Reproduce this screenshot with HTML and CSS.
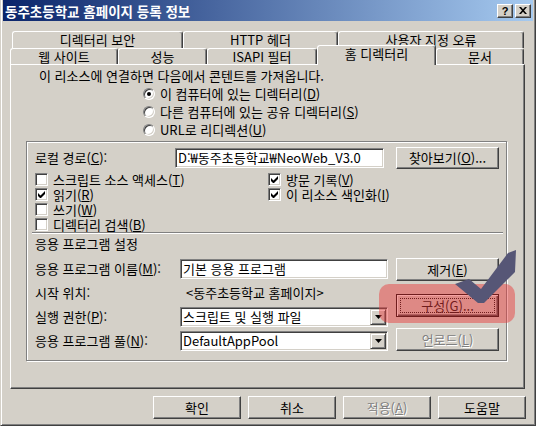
FILE: index.html
```html
<!DOCTYPE html>
<html lang="ko">
<head>
    <meta charset="UTF-8">
    <title>동주초등학교 홈페이지 등록 정보</title>
    <link rel="stylesheet" href="styles.css">
</head>
<body>
    <div class="window">
        <div class="titlebar">
            <span class="title">동주초등학교 홈페이지 등록 정보</span>
            <div class="caption-buttons">
                <div class="caption-btn">?</div>
                <div class="caption-btn">
                    <svg width="8" height="7" viewBox="0 0 8 7"><path d="M0 0h2l2 2.3L6 0h2L5 3.5 8 7H6L4 4.7 2 7H0l3-3.5z" fill="#000"/></svg>
                </div>
            </div>
        </div>

        <div class="client">
            <div class="tabs">
                <div class="tab-row back">
                    <div class="tab" style="width: 171px">디렉터리 보안</div>
                    <div class="tab" style="width: 155px">HTTP 헤더</div>
                    <div class="tab" style="width: 186px">사용자 지정 오류</div>
                </div>
                <div class="tab-row front">
                    <div class="tab" style="width: 108px">웹 사이트</div>
                    <div class="tab" style="width: 89px">성능</div>
                    <div class="tab" style="width: 110px">ISAPI 필터</div>
                    <div class="tab selected" style="width: 119px">홈 디렉터리</div>
                    <div class="tab" style="width: 88px">문서</div>
                </div>
            </div>

            <div class="panel">
                <p class="intro">이 리소스에 연결하면 다음에서 콘텐트를 가져옵니다.</p>
                <div class="radio-list">
                    <div class="option"><span class="radio checked"></span>이 컴퓨터에 있는 디렉터리(<u>D</u>)</div>
                    <div class="option"><span class="radio"></span>다른 컴퓨터에 있는 공유 디렉터리(<u>S</u>)</div>
                    <div class="option"><span class="radio"></span>URL로 리디렉션(<u>U</u>)</div>
                </div>

                <div class="group">
                    <div class="path-row">
                        <span class="path-label">로컬 경로(<u>C</u>):</span>
                        <div class="textbox path">D:₩동주초등학교₩NeoWeb_V3.0</div>
                        <div class="btn">찾아보기(<u>O</u>)...</div>
                    </div>

                    <div class="check-grid">
                        <div class="option"><span class="checkbox"></span>스크립트 소스 액세스(<u>T</u>)</div>
                        <div class="option"><span class="checkbox checked"><svg width="7" height="7" viewBox="0 0 7 7"><path d="M0 2v3l2 2h1l4-4V0L2.5 4.5z" fill="#000"/></svg></span>방문 기록(<u>V</u>)</div>
                        <div class="option"><span class="checkbox checked"><svg width="7" height="7" viewBox="0 0 7 7"><path d="M0 2v3l2 2h1l4-4V0L2.5 4.5z" fill="#000"/></svg></span>읽기(<u>R</u>)</div>
                        <div class="option"><span class="checkbox checked"><svg width="7" height="7" viewBox="0 0 7 7"><path d="M0 2v3l2 2h1l4-4V0L2.5 4.5z" fill="#000"/></svg></span>이 리소스 색인화(<u>I</u>)</div>
                        <div class="option"><span class="checkbox"></span>쓰기(<u>W</u>)</div>
                        <div></div>
                        <div class="option"><span class="checkbox"></span>디렉터리 검색(<u>B</u>)</div>
                    </div>

                    <div class="separator"></div>
                    <div class="section-title">응용 프로그램 설정</div>

                    <div class="app">
                        <div class="app-fields">
                            <span>응용 프로그램 이름(<u>M</u>):</span>
                            <div class="textbox">기본 응용 프로그램</div>
                            <span>시작 위치:</span>
                            <span class="start-value">&lt;동주초등학교 홈페이지&gt;</span>
                            <span>실행 권한(<u>P</u>):</span>
                            <div class="select">
                                <span class="select-value">스크립트 및 실행 파일</span>
                                <span class="select-arrow"><svg width="7" height="4" viewBox="0 0 7 4"><path d="M0 0h7L3.5 4z" fill="#000"/></svg></span>
                            </div>
                            <span>응용 프로그램 풀(<u>N</u>):</span>
                            <div class="select">
                                <span class="select-value">DefaultAppPool</span>
                                <span class="select-arrow"><svg width="7" height="4" viewBox="0 0 7 4"><path d="M0 0h7L3.5 4z" fill="#000"/></svg></span>
                            </div>
                        </div>
                        <div class="app-buttons">
                            <div class="btn">제거(<u>E</u>)</div>
                            <div class="btn default">구성(<u>G</u>)...</div>
                            <div class="btn disabled">언로드(<u>L</u>)</div>
                        </div>
                    </div>
                </div>
            </div>

            <div class="actions">
                <div class="btn action">확인</div>
                <div class="btn action">취소</div>
                <div class="btn action disabled">적용(<u>A</u>)</div>
                <div class="btn action">도움말</div>
            </div>
        </div>

        <!-- annotation drawn over the dialog -->
        <div class="highlight"></div>
        <svg class="tick" width="70" height="60" viewBox="0 0 70 60">
            <path d="M5 36L19 31L31 41L58 5L66 2L65 24L34 55L28 55Z" fill="#565676"/>
        </svg>
    </div>
</body>
</html>
```

FILE: styles.css
```css
* {
    box-sizing: border-box;
}

body {
    margin: 0;
    background: #d4d0c8;
    font-family: "Noto Sans CJK KR", "Noto Sans", sans-serif;
    font-size: 13px;
    line-height: 16px;
    color: #000;
}

.window {
    position: relative;
    width: 536px;
    height: 426px;
    padding: 0 2px 2px 2px;
    background: #d4d0c8;
    border-style: solid;
    border-width: 0 1px 1px 1px;
    border-color: #d4d0c8 #404040 #404040 #d4d0c8;
    box-shadow: inset 1px 0 #fff, inset -1px -1px #808080;
}

.titlebar {
    display: flex;
    align-items: center;
    height: 21px;
    padding-left: 2px;
    background: linear-gradient(to right, #0a246a, #a6caf0);
    color: #fff;
    font-size: 13.5px;
    font-weight: bold;
}

.caption-buttons {
    display: flex;
    gap: 2px;
    margin-left: auto;
    margin-right: 2px;
}

.caption-btn {
    display: flex;
    align-items: center;
    justify-content: center;
    width: 16px;
    height: 14px;
    background: #d4d0c8;
    border: 1px solid;
    border-color: #fff #404040 #404040 #fff;
    box-shadow: inset -1px -1px #808080;
    color: #000;
    font-family: "Liberation Sans", sans-serif;
    font-size: 11px;
    font-weight: bold;
    line-height: 12px;
}

.client {
    padding: 10px 0 0 7px;
}

/* tabs */
.tab-row {
    display: flex;
}

.tab-row.back {
    height: 17px;
    margin-left: 2px;
}

.tab-row.front {
    height: 16px;
    align-items: flex-end;
}

.tab {
    height: 100%;
    border: 1px solid;
    border-bottom: none;
    border-color: #fff #404040 transparent #fff;
    border-radius: 3px 3px 0 0;
    box-shadow: inset -1px 0 #808080;
    text-align: center;
    line-height: 15px;
    white-space: nowrap;
}

.tab.selected {
    position: relative;
    z-index: 1;
    height: 20px;
    margin-bottom: -1px;
    background: #d4d0c8;
    line-height: 16px;
}

.panel {
    width: 515px;
    height: 325px;
    padding: 2px 0 0 15px;
    border: 1px solid;
    border-color: #fff #404040 #404040 #fff;
    box-shadow: inset -1px -1px #808080;
}

.intro {
    margin: 0;
    padding-left: 13px;
    line-height: 18px;
}

.radio-list {
    margin-left: 117px;
}

.option {
    display: flex;
    align-items: center;
    height: 18px;
    line-height: 16px;
    white-space: nowrap;
}

.radio {
    position: relative;
    width: 12px;
    height: 12px;
    margin-right: 5px;
    border-radius: 50%;
    background: #fff;
    border: 1px solid;
    border-color: #808080 #fff #fff #808080;
    box-shadow: inset 1px 1px #404040, inset -1px -1px #d4d0c8;
}

.radio.checked::after {
    content: "";
    position: absolute;
    left: 3px;
    top: 3px;
    width: 4px;
    height: 4px;
    border-radius: 50%;
    background: #000;
}

/* group box */
.group {
    width: 481px;
    height: 220px;
    margin-top: 2px;
    padding: 5px 0 0 8px;
    border: 1px solid #808080;
    box-shadow: inset 1px 1px #fff, 1px 1px #fff;
}

.path-row {
    display: flex;
    align-items: center;
    height: 22px;
}

.path-label {
    width: 140px;
}

.textbox,
.select {
    height: 20px;
    background: #fff;
    border: 1px solid;
    border-color: #808080 #fff #fff #808080;
    box-shadow: inset 1px 1px #404040, inset -1px -1px #d4d0c8;
    line-height: 18px;
    white-space: nowrap;
    overflow: hidden;
}

.textbox {
    padding: 0 2px;
}

.textbox.path {
    width: 209px;
    margin-right: 12px;
}

.btn {
    position: relative;
    display: flex;
    align-items: center;
    justify-content: center;
    width: 103px;
    height: 23px;
    background: #d4d0c8;
    border: 1px solid;
    border-color: #fff #404040 #404040 #fff;
    box-shadow: inset -1px -1px #808080;
    white-space: nowrap;
}

.path-row .btn {
    height: 22px;
}

.btn.default {
    border-color: #000;
    box-shadow: inset 1px 1px #fff, inset -1px -1px #404040, inset -2px -2px #808080;
}

.btn.default::after {
    content: "";
    position: absolute;
    inset: 3px;
    border: 1px dotted #000;
}

.btn.disabled {
    color: #808080;
    text-shadow: 1px 1px #fff;
}

.check-grid {
    display: grid;
    grid-template-columns: 233px 1fr;
    grid-auto-rows: 15px;
    margin-top: 3px;
}

.check-grid .option {
    height: 15px;
    line-height: 15px;
}

.checkbox {
    display: flex;
    align-items: center;
    justify-content: center;
    width: 13px;
    height: 13px;
    margin-right: 5px;
    background: #fff;
    border: 1px solid;
    border-color: #808080 #fff #fff #808080;
    box-shadow: inset 1px 1px #404040, inset -1px -1px #d4d0c8;
}

.separator {
    width: 471px;
    height: 2px;
    margin-left: -3px;
    border-top: 1px solid #808080;
    border-bottom: 1px solid #fff;
}

.section-title {
    margin-top: 2px;
    line-height: 16px;
}

.app {
    display: flex;
    margin-top: 6px;
}

.app-fields {
    display: grid;
    grid-template-columns: 145px 208px;
    grid-auto-rows: 20px;
    row-gap: 4px;
    align-items: center;
    padding-top: 1px;
}

.start-value {
    padding-left: 6px;
}

.select {
    display: flex;
    padding: 1px;
}

.select-value {
    flex: 1;
    padding-left: 1px;
    line-height: 16px;
}

.select-arrow {
    display: flex;
    align-items: center;
    justify-content: center;
    width: 16px;
    height: 16px;
    background: #d4d0c8;
    border: 1px solid;
    border-color: #d4d0c8 #404040 #404040 #d4d0c8;
    box-shadow: inset 1px 1px #fff, inset -1px -1px #808080;
}

.app-buttons {
    margin-left: 8px;
}

.app-buttons .btn + .btn {
    margin-top: 13px;
}

.app-buttons .btn.disabled {
    margin-top: 11px;
}

/* bottom buttons */
.actions {
    display: flex;
    justify-content: flex-end;
    gap: 7px;
    margin-top: 7px;
    padding-right: 7px;
}

.btn.action {
    width: 88px;
}

/* annotation */
.highlight {
    position: absolute;
    left: 378px;
    top: 284px;
    width: 136px;
    height: 39px;
    border-radius: 10px;
    background: rgba(235, 60, 60, 0.48);
}

.tick {
    position: absolute;
    left: 449px;
    top: 248px;
}
```
